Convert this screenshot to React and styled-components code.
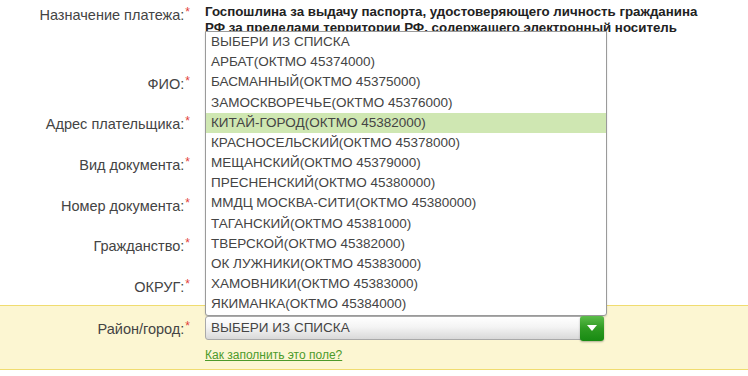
import styled, { createGlobalStyle } from "styled-components";

const GlobalStyle = createGlobalStyle`
    body {
        margin: 0;
        background: #fff;
        font-family: "Liberation Sans", Arial, sans-serif;
    }
`;

const Form = styled.div`
    width: 748px;
    height: 376px;
    overflow: hidden;
    padding-top: 4px;
    box-sizing: border-box;
`;

const Row = styled.div`
    display: grid;
    grid-template-columns: 190px 1fr;
    column-gap: 15px;
    align-items: ${(p) => (p.$top ? "start" : "center")};
    height: ${(p) => p.$h || 40.6}px;
`;

const Label = styled.div`
    text-align: right;
    font-size: 14.5px;
    line-height: 16px;
    color: #444;
    white-space: nowrap;
`;

const Star = styled.span`
    color: #e2403a;
    font-size: 12px;
    vertical-align: 4px;
    margin-left: 1px;
`;

const Purpose = styled.div`
    font-size: 13.3px;
    font-weight: bold;
    line-height: 16px;
    color: #222;
    white-space: nowrap;
`;

const Band = styled.div`
    background: #fcf6d2;
    border-top: 1px solid #f0dc70;
    border-bottom: 1px solid #f0dc70;
    padding: 10px 0 7px;
    margin-top: -1px;
`;

const BandRow = styled.div`
    display: grid;
    grid-template-columns: 190px 1fr;
    column-gap: 15px;
    align-items: center;
`;

const SelectWrap = styled.div`
    position: relative;
    width: 399px;
`;

const Select = styled.div`
    height: 24px;
    box-sizing: border-box;
    border: 1px solid #a9a9a9;
    border-radius: 3px;
    background: linear-gradient(#ffffff 0%, #f4f4f4 45%, #d9d9d9 100%);
    display: flex;
    align-items: center;
    padding-left: 5px;
    font-size: 13.5px;
    color: #444;
    position: relative;
`;

const Arrow = styled.div`
    position: absolute;
    right: -1px;
    top: -1px;
    width: 24px;
    height: 25px;
    border-radius: 3px;
    background: linear-gradient(#5cbd4a 0%, #2e9a22 50%, #178a12 100%);
    box-shadow: 0 1px 2px rgba(0, 0, 0, 0.3);
    display: flex;
    align-items: center;
    justify-content: center;
`;

const List = styled.ul`
    position: absolute;
    left: 0;
    bottom: 100%;
    width: 402px;
    margin: 0;
    padding: 0;
    list-style: none;
    background: #fff;
    border: 1px solid #9a9a9a;
    border-radius: 0 0 3px 3px;
    box-sizing: border-box;
    box-shadow: 0 1px 2px rgba(0, 0, 0, 0.15);
`;

const Item = styled.li`
    height: 20.2px;
    line-height: 20px;
    padding-left: 5px;
    font-size: 13.5px;
    color: #444;
    background: ${(p) => (p.$active ? "#cfe7b2" : "transparent")};
    white-space: nowrap;
`;

const Help = styled.a`
    display: block;
    margin: 8px 0 0 205px;
    font-size: 12px;
    line-height: 14px;
    color: #4c9a2a;
    text-decoration: underline;
`;

const districts = [
    "ВЫБЕРИ ИЗ СПИСКА",
    "АРБАТ(ОКТМО 45374000)",
    "БАСМАННЫЙ(ОКТМО 45375000)",
    "ЗАМОСКВОРЕЧЬЕ(ОКТМО 45376000)",
    "КИТАЙ-ГОРОД(ОКТМО 45382000)",
    "КРАСНОСЕЛЬСКИЙ(ОКТМО 45378000)",
    "МЕЩАНСКИЙ(ОКТМО 45379000)",
    "ПРЕСНЕНСКИЙ(ОКТМО 45380000)",
    "ММДЦ МОСКВА-СИТИ(ОКТМО 45380000)",
    "ТАГАНСКИЙ(ОКТМО 45381000)",
    "ТВЕРСКОЙ(ОКТМО 45382000)",
    "ОК ЛУЖНИКИ(ОКТМО 45383000)",
    "ХАМОВНИКИ(ОКТМО 45383000)",
    "ЯКИМАНКА(ОКТМО 45384000)",
];

const fields = [
    "ФИО:",
    "Адрес плательщика:",
    "Вид документа:",
    "Номер документа:",
    "Гражданство:",
    "ОКРУГ:",
];

const App = () => {
    return (
        <>
            <GlobalStyle />
            <Form>
                <Row $top $h={58}>
                    <Label>
                        Назначение платежа:<Star>*</Star>
                    </Label>
                    <Purpose>
                        Госпошлина за выдачу паспорта, удостоверяющего личность гражданина
                        <br />
                        РФ за пределами территории РФ, содержащего электронный носитель
                    </Purpose>
                </Row>
                {fields.map((f) => (
                    <Row key={f}>
                        <Label>
                            {f}
                            <Star>*</Star>
                        </Label>
                        <div />
                    </Row>
                ))}
                <Band>
                    <BandRow>
                        <Label>
                            Район/город:<Star>*</Star>
                        </Label>
                        <SelectWrap>
                            <List>
                                {districts.map((d, i) => (
                                    <Item key={d} $active={i === 4}>
                                        {d}
                                    </Item>
                                ))}
                            </List>
                            <Select>
                                ВЫБЕРИ ИЗ СПИСКА
                                <Arrow>
                                    <svg width="10" height="6" viewBox="0 0 10 6">
                                        <path d="M0 0 L10 0 L5 6 Z" fill="#fff" />
                                    </svg>
                                </Arrow>
                            </Select>
                        </SelectWrap>
                    </BandRow>
                    <Help href="#">Как заполнить это поле?</Help>
                </Band>
            </Form>
        </>
    );
};

export default App;
